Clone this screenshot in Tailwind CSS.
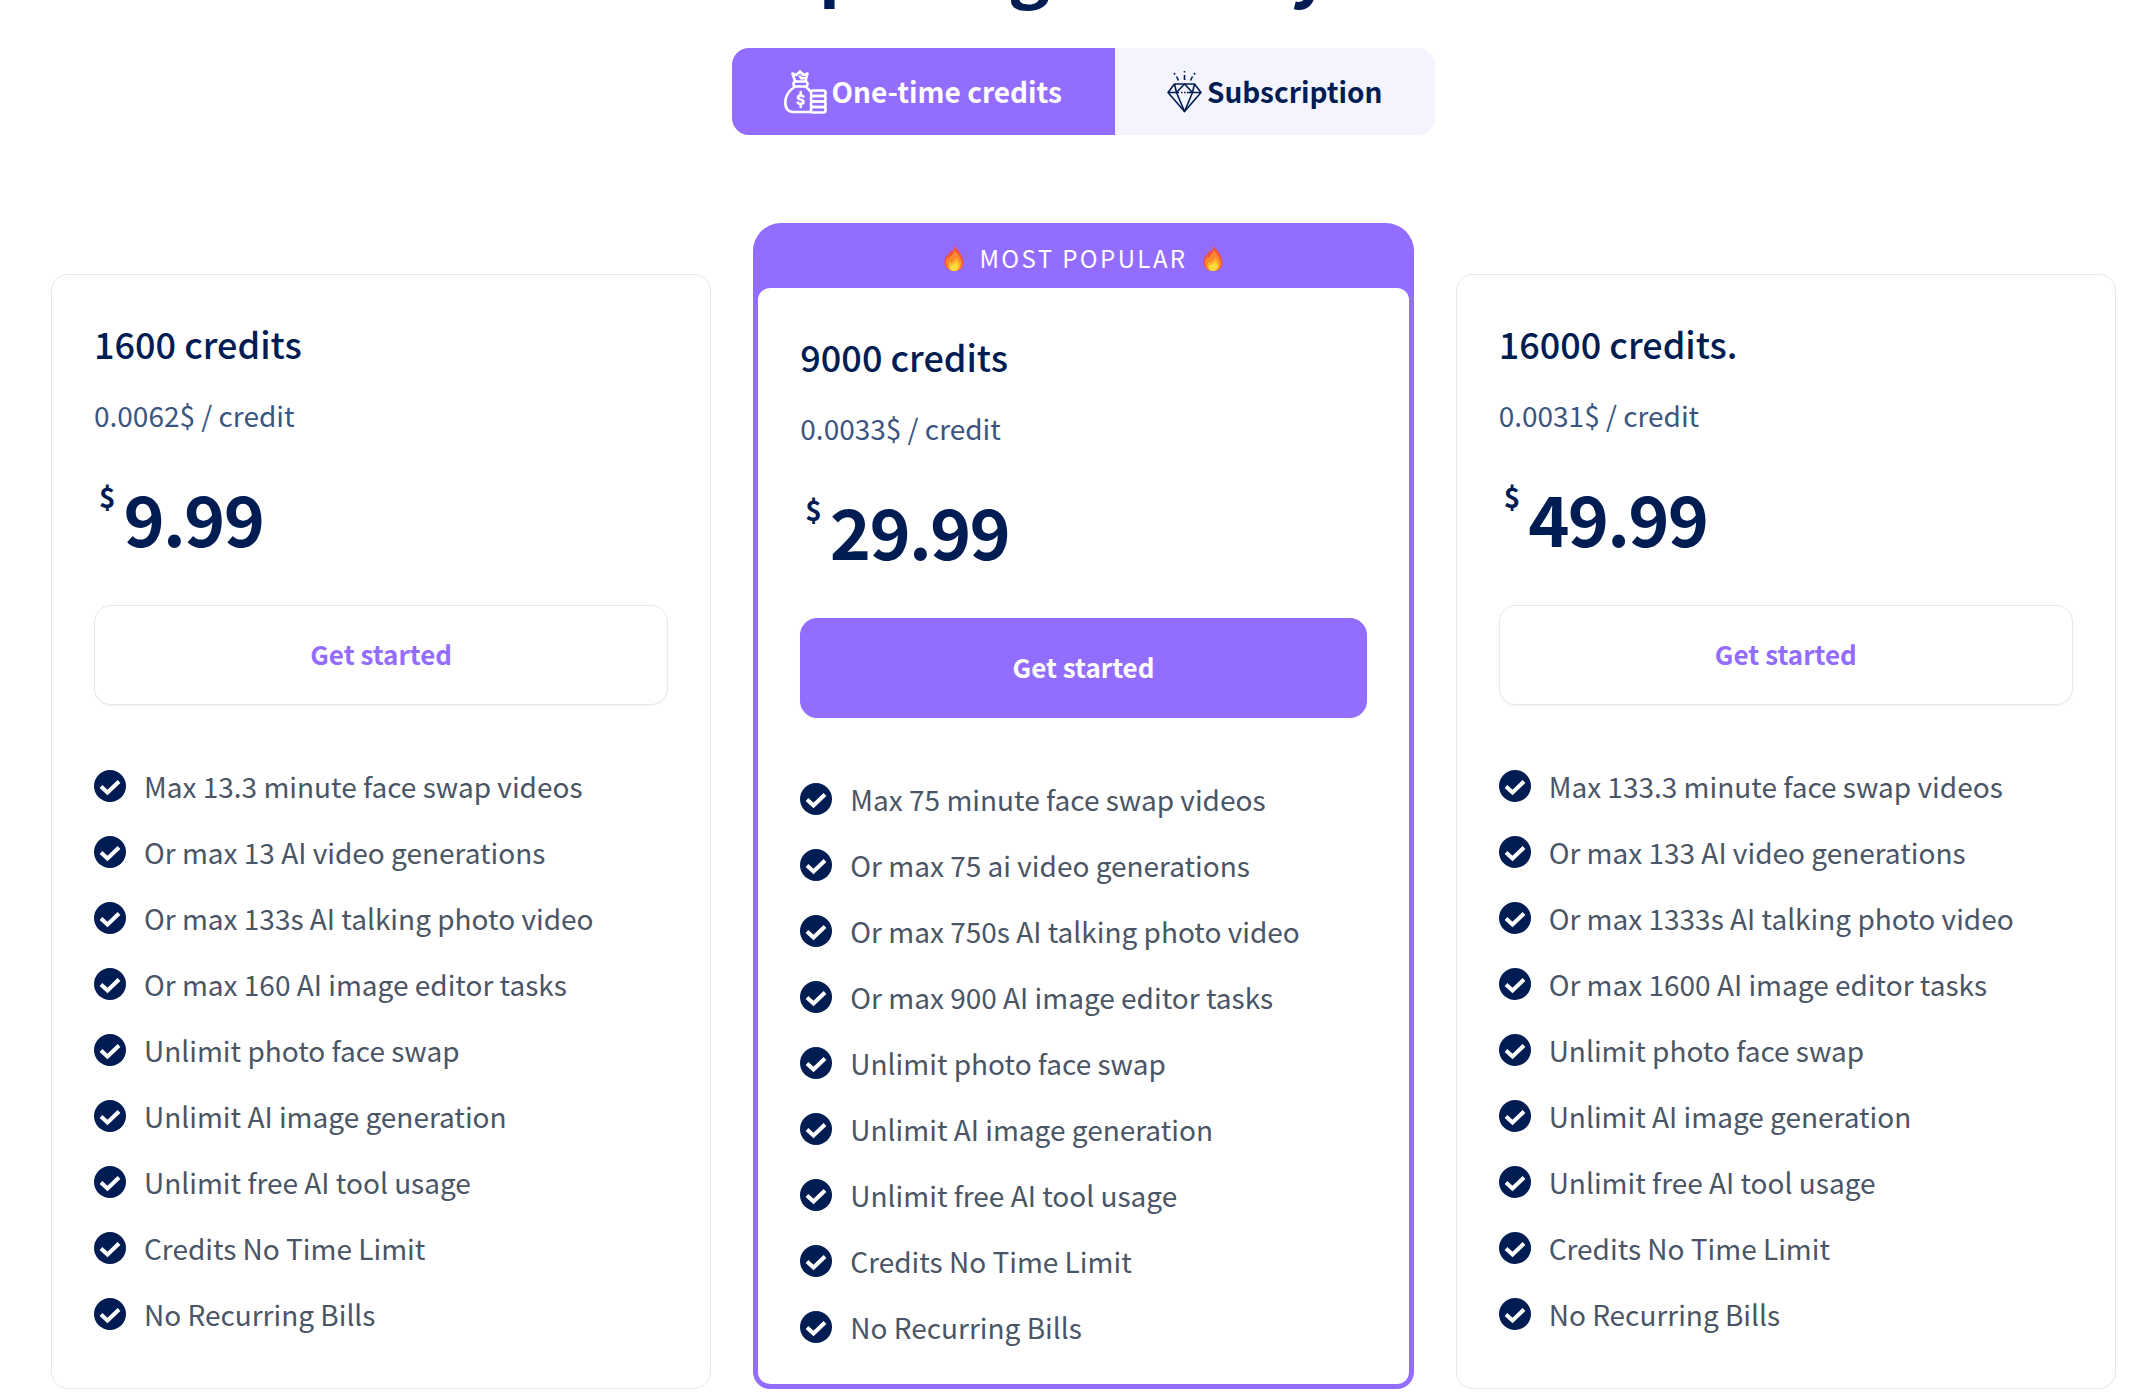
<!DOCTYPE html>
<html lang="en">
<head>
    <meta charset="UTF-8">
    <meta name="viewport" content="width=device-width, initial-scale=1.0">
    <title>Pricing</title>
    <script src="https://cdn.jsdelivr.net/npm/@tailwindcss/browser@4"></script>
</head>
<body class="bg-white text-[#001d53] font-['Noto_Sans_CJK_SC',sans-serif] overflow-x-hidden">
    <!-- shared icons -->
    <svg class="hidden">
        <symbol id="check" viewBox="0 0 32 32">
            <circle cx="16" cy="16" r="16" fill="#001d53"/>
            <path d="M7 16.500l6.500 6L25 11.500" fill="none" stroke="#fff" stroke-width="4"/>
        </symbol>
        <symbol id="flame" viewBox="0 0 20 25">
            <path d="M10.500 0C14 4 19.500 10 19.500 17c0 5-3.500 8-9 8S.500 22 .500 16.500C.500 13 2 10 3.500 8l.5 2C5 6.500 6.500 5 7 4l.5 2.500C9 4.500 10 3 10.500 0z" fill="#f4533a"/>
            <path d="M10.500 4c2.500 3 7.500 8 7.500 13.500 0 4.500-3 7.500-7.500 7.500S2 21.500 2 17c0-3 1.500-5.500 2.500-6.500 0 0 0 2 .5 2.500C6 9.500 10 8.500 10.500 4z" fill="#fb8a2e"/>
            <path d="M12 11c1 2.500 4 4.500 4 8.500 0 3-2.500 5.500-6 5.500s-5.500-2-5.500-5c0-2 1-3.500 2-4.500 0 1 .5 1.500 1 1.500C9 15 12 14.500 12 11z" fill="#fdb62f"/>
            <path d="M12 16c.5 1.500 2.500 2.500 2.500 4.500 0 2.500-2 4.500-4.500 4.500s-4-1.500-4-3.500 1.500-2.500 2.500-3S11.500 17.500 12 16z" fill="#ffdc3c"/>
        </symbol>
    </svg>

    <main class="pl-[51px] pr-[26px] pb-[10px]">
        <h1 class="-mt-[71px] text-center text-[70px] leading-[70px] font-bold tracking-tight">Our pricing to every user</h1>

        <div class="mt-[49px] flex justify-center">
            <div class="flex h-[87px] overflow-hidden rounded-[17px] bg-[#f4f4ff] text-[28px] font-bold">
                <button class="flex items-center gap-[5px] bg-[#936dff] pr-[53px] pl-[52px] text-white">
                    <svg class="w-[43px] h-[44px]" viewBox="0 0 43 44" fill="none" stroke="currentColor" stroke-width="2.600" stroke-linecap="round" stroke-linejoin="round">
                        <path d="M11 11L8.500 3.500l4 1.500L16 1.500 19.500 5l4-1.500L21.500 11M16 6.500l1.500 2 2.500-.5"/>
                        <rect x="9.500" y="11.500" width="14" height="5" rx="2.500"/>
                        <path d="M10.500 17C5 20.500 1.300 26 1.300 32.500c0 6.500 3 9.500 8.700 9.500h17M22 17c1.500 1 2.500 2 3.500 3.500"/>
                        <path d="M19.500 26.500c-1-1.500-5.500-1.500-5.500 1s5.500 1.500 5.500 4.200-4.500 2.800-5.700 1M16.700 22v3M16.700 34v3"/>
                        <rect x="27" y="20.500" width="14.500" height="5.500" rx="2"/>
                        <rect x="27" y="26" width="14.500" height="5.500" rx="2"/>
                        <rect x="27" y="31.500" width="14.500" height="5.500" rx="2"/>
                        <rect x="27" y="37" width="14.500" height="5.500" rx="2"/>
                    </svg>
                    <span class="pb-0.5">One-time credits</span>
                </button>
                <button class="flex items-center gap-[5px] pr-[53px] pl-[52px]">
                    <svg class="w-[35px] h-[43px]" viewBox="0 0 35 43" fill="none" stroke="currentColor" stroke-width="1.600" stroke-linejoin="round">
                        <path d="M7.500 14h20L34 22.500 17.500 41.500 1 22.500zM1 22.500h11M14 22.500h1.500M17 22.500h1.500M20 22.500h14"/>
                        <path d="M7.500 14l2 8.500 8-8.500 8 8.500 2-8.500M9.500 22.500l8 19 8-19"/>
                        <path d="M17.500 1v1.500M17.500 5v5M7 3l1 1.500M9.500 6.500l2 4M28 3l-1 1.500M25.500 6.500l-2 4"/>
                    </svg>
                    <span class="pb-0.5">Subscription</span>
                </button>
            </div>
        </div>

        <div id="plans" class="mt-[88px] grid grid-cols-3 items-end gap-[42px]"></div>
    </main>

    <script>
        const plans = [
            { name: "1600 credits", rate: "0.0062$ / credit", price: "9.99", features: [
                "Max 13.3 minute face swap videos",
                "Or max 13 AI video generations",
                "Or max 133s AI talking photo video",
                "Or max 160 AI image editor tasks"
            ] },
            { name: "9000 credits", rate: "0.0033$ / credit", price: "29.99", popular: true, features: [
                "Max 75 minute face swap videos",
                "Or max 75 ai video generations",
                "Or max 750s AI talking photo video",
                "Or max 900 AI image editor tasks"
            ] },
            { name: "16000 credits.", rate: "0.0031$ / credit", price: "49.99", features: [
                "Max 133.3 minute face swap videos",
                "Or max 133 AI video generations",
                "Or max 1333s AI talking photo video",
                "Or max 1600 AI image editor tasks"
            ] }
        ];

        // every plan ends with these
        const common = [
            "Unlimit photo face swap",
            "Unlimit AI image generation",
            "Unlimit free AI tool usage",
            "Credits No Time Limit",
            "No Recurring Bills"
        ];

        function planBody(plan) {
            const button = plan.popular
                ? "bg-[#936dff] text-white border-[#936dff]"
                : "bg-white text-[#936dff] border-gray-200";
            return `
                <h2 class="text-[36px] leading-[52px] font-medium">${plan.name}</h2>
                <p class="mt-[26px] text-[28px] leading-[40px] text-[#3a5580]">${plan.rate}</p>
                <p class="mt-[47px] flex items-start gap-2 pl-[5px] font-bold">
                    <span class="text-[28px] leading-[28px]">$</span>
                    <span class="text-[70px] leading-[70px] tracking-tight">${plan.price}</span>
                </p>
                <button class="mt-[53px] h-[100px] w-full rounded-[17px] border pb-1 text-[26px] font-bold shadow-xs ${button}">Get started</button>
                <ul class="mt-[48px]">
                    ${plan.features.concat(common).map(text => `
                        <li class="flex h-[66px] items-center gap-[18px] text-[28px] text-gray-600">
                            <svg class="size-8 shrink-0"><use href="#check"/></svg>
                            <span>${text}</span>
                        </li>`).join("")}
                </ul>
            `;
        }

        document.getElementById("plans").innerHTML = plans.map(plan => plan.popular ? `
            <section class="rounded-t-[28px] rounded-b-[17px] bg-[#936dff] p-[5px]">
                <div class="flex h-[60px] items-center justify-center gap-[15px] text-2xl tracking-widest text-white">
                    <svg class="h-[25px] w-5"><use href="#flame"/></svg>
                    MOST POPULAR
                    <svg class="h-[25px] w-5"><use href="#flame"/></svg>
                </div>
                <div class="rounded-xl bg-white px-[42px] pt-[42px] pb-6">${planBody(plan)}</div>
            </section>` : `
            <section class="rounded-[17px] border border-gray-200 px-[42px] pt-[42px] pb-[41px]">${planBody(plan)}</section>`
        ).join("");
    </script>
</body>
</html>
